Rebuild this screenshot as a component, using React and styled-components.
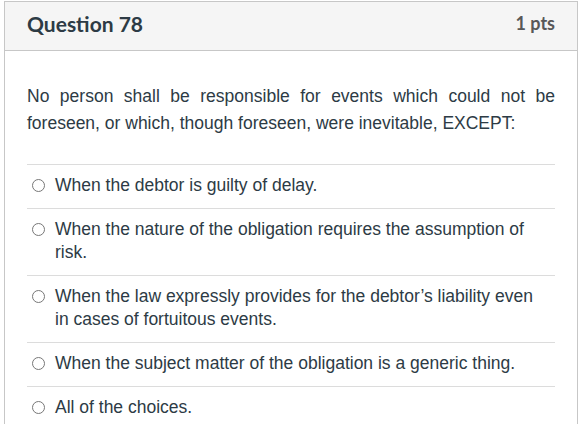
import React from "react";
import styled, { createGlobalStyle } from "styled-components";

const GlobalStyle = createGlobalStyle`
  body {
    margin: 0;
    background: #ffffff;
  }
`;

const Panel = styled.div`
  box-sizing: border-box;
  width: 574px;
  margin: 1px 0 0 4px;
  border: 1px solid #c7c7c7;
  border-bottom: none;
  background: #ffffff;
`;

const Header = styled.div`
  height: 42px;
  padding: 0 22px 6px;
  background: #f5f5f5;
  border-bottom: 1px solid #c7c7c7;
  display: flex;
  align-items: center;
  justify-content: space-between;
  font-family: Lato, "Liberation Sans", sans-serif;
  font-weight: 700;
`;

const Title = styled.h2`
  margin: 0;
  font-size: 21px;
  color: #2d3b45;
`;

const Points = styled.span`
  font-size: 18px;
  color: #585858;
`;

const Body = styled.div`
  padding: 32px 22px 0;
  font-family: "Liberation Sans", Arial, sans-serif;
  color: #2d3b45;
`;

const Prompt = styled.p`
  margin: 0 0 27px;
  font-size: 17.5px;
  line-height: 27px;
  text-align: justify;
`;

const Answers = styled.div`
  display: flex;
  flex-direction: column;
`;

const Answer = styled.label`
  display: flex;
  align-items: flex-start;
  gap: 10px;
  padding: 9px 0 11px 5px;
  border-top: 1px solid #dcdcdc;
  font-size: 17.5px;
  line-height: 23px;
  cursor: pointer;
`;

const Radio = styled.span`
  flex: none;
  box-sizing: border-box;
  width: 13px;
  height: 13px;
  margin-top: 5px;
  border: 1px solid #777777;
  border-radius: 50%;
  background: #ffffff;
`;

const AnswerText = styled.span`
  padding-right: 4px;
`;

const choices = [
  "When the debtor is guilty of delay.",
  "When the nature of the obligation requires the assumption of risk.",
  "When the law expressly provides for the debtor’s liability even in cases of fortuitous events.",
  "When the subject matter of the obligation is a generic thing.",
  "All of the choices.",
];

const App = () => {
  return (
    <>
      <GlobalStyle />
      <Panel>
        <Header>
          <Title>Question 78</Title>
          <Points>1 pts</Points>
        </Header>
        <Body>
          <Prompt>
            No person shall be responsible for events which could not be
            foreseen, or which, though foreseen, were inevitable, EXCEPT:
          </Prompt>
          <Answers>
            {choices.map((c) => (
              <Answer key={c}>
                <Radio />
                <AnswerText>{c}</AnswerText>
              </Answer>
            ))}
          </Answers>
        </Body>
      </Panel>
    </>
  );
};

export default App;
